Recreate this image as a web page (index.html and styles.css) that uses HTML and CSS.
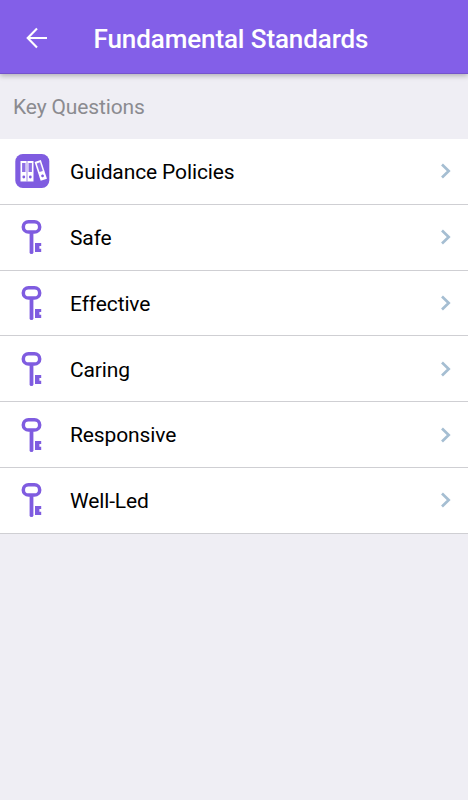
FILE: index.html
```html
<!DOCTYPE html>
<html lang="en">
<head>
    <meta charset="UTF-8">
    <meta name="viewport" content="width=device-width, initial-scale=1.0">
    <title>Fundamental Standards</title>
    <link rel="stylesheet" href="styles.css">
</head>
<body>
    <!-- shared icons -->
    <svg class="sprite" width="0" height="0">
        <symbol id="key" viewBox="0 0 36 66">
            <rect x="8.3" y="16.7" width="16.4" height="10.4" rx="5.2" fill="none" stroke="#7f5ce0" stroke-width="3.5"/>
            <path d="M16.5 28V47.2" fill="none" stroke="#7f5ce0" stroke-width="3.8" stroke-linecap="round"/>
            <path d="M20 38h6.2v3.1h-1.8v2.6h1.8V47H20z" fill="#7f5ce0"/>
        </symbol>
        <symbol id="chevron" viewBox="0 0 12 18">
            <path d="M2 2.5L8.7 9L2 15.5" fill="none" stroke="#a5bed2" stroke-width="2.7"/>
        </symbol>
    </svg>

    <header class="header">
        <a class="back" href="#" aria-label="Back">
            <svg width="22" height="22" viewBox="0 0 22 22" fill="none" stroke="#fff" stroke-width="2.1">
                <path d="M21 11H2M11 1.6L1.7 11L11 20.4"/>
            </svg>
        </a>
        <h1>Fundamental Standards</h1>
    </header>

    <h2 class="section-title">Key Questions</h2>

    <ul class="list">
        <li>
            <svg class="icon" viewBox="0 0 36 66">
                <rect x="0.3" y="15" width="34" height="34" rx="7.5" fill="#7f5ce0"/>
                <path d="M5.5 22h13v20.5h-13z" fill="#fff"/>
                <path d="M7.1 24h3.4v9H7.1zM13.5 24h3.4v9h-3.4z" fill="#8f70e6"/>
                <path d="M12 22v20.5" stroke="#7f5ce0" stroke-width="0.7"/>
                <circle cx="8.8" cy="38" r="1.4" fill="#7f5ce0"/>
                <circle cx="15.3" cy="38" r="1.4" fill="#7f5ce0"/>
                <g transform="rotate(-18 25.7 31.2)">
                    <path d="M22.4 21.5H29V41.3h-6.6z" fill="#fff"/>
                    <path d="M24 23.5h3.5v9H24z" fill="#8f70e6"/>
                    <circle cx="25.7" cy="37.2" r="1.4" fill="#7f5ce0"/>
                </g>
            </svg>
            <span>Guidance Policies</span>
            <svg class="chevron"><use href="#chevron"/></svg>
        </li>
        <li>
            <svg class="icon"><use href="#key"/></svg>
            <span>Safe</span>
            <svg class="chevron"><use href="#chevron"/></svg>
        </li>
        <li>
            <svg class="icon"><use href="#key"/></svg>
            <span>Effective</span>
            <svg class="chevron"><use href="#chevron"/></svg>
        </li>
        <li>
            <svg class="icon"><use href="#key"/></svg>
            <span>Caring</span>
            <svg class="chevron"><use href="#chevron"/></svg>
        </li>
        <li>
            <svg class="icon"><use href="#key"/></svg>
            <span>Responsive</span>
            <svg class="chevron"><use href="#chevron"/></svg>
        </li>
        <li>
            <svg class="icon"><use href="#key"/></svg>
            <span>Well-Led</span>
            <svg class="chevron"><use href="#chevron"/></svg>
        </li>
    </ul>
</body>
</html>
```

FILE: styles.css
```css
* {
    box-sizing: border-box;
}

body {
    margin: 0;
    min-height: 100vh;
    background-color: #efeef4;
    font-family: Roboto, sans-serif;
    color: #000;
}

.sprite {
    display: none;
}

.header {
    display: flex;
    align-items: center;
    height: 74px;
    padding: 3px 26px 0;
    background-color: #835fe8;
    border-bottom: 1px solid #7453cc;
    box-shadow: 0 2px 5px rgba(0, 0, 0, 0.25);
}

.back {
    display: flex;
    width: 67.5px;
}

.header h1 {
    margin: 0;
    padding-top: 1px;
    font-size: 26px;
    font-weight: 500;
    line-height: 32px;
    letter-spacing: -0.1px;
    color: #fff;
    white-space: nowrap;
}

.section-title {
    display: flex;
    align-items: center;
    height: 65px;
    margin: 0;
    padding: 1px 13px 0;
    font-size: 21px;
    font-weight: 400;
    letter-spacing: -0.13px;
    color: #8b8b90;
}

.list {
    margin: 0;
    padding: 0;
    list-style: none;
}

.list li {
    display: flex;
    align-items: center;
    height: 65.8px;
    padding: 0 16px 0 15px;
    background-color: #fff;
    border-bottom: 1px solid #cfcfd3;
    font-size: 21px;
    letter-spacing: -0.12px;
}

.list span {
    flex: 1;
    padding-top: 1.6px;
}

.icon {
    width: 36px;
    height: 66px;
    margin: 1px 19px -1px 0;
}

.chevron {
    width: 12px;
    height: 18px;
}
```
